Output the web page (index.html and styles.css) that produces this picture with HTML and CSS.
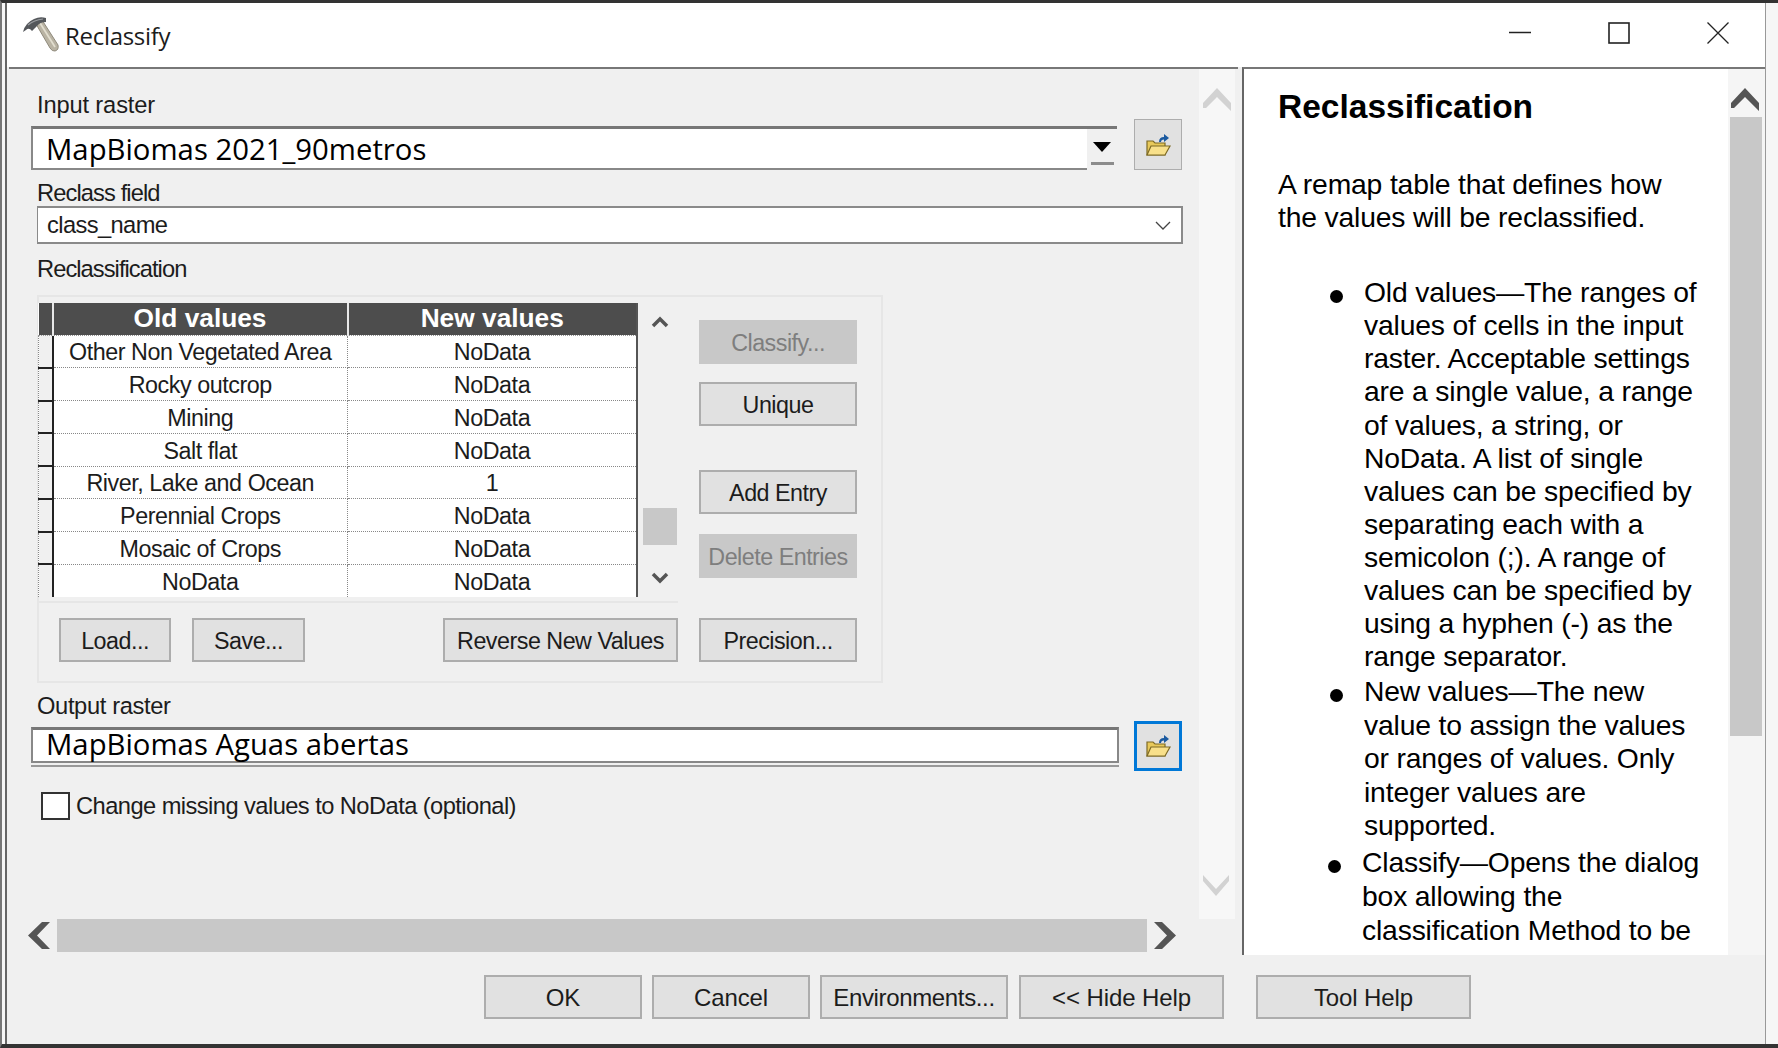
FILE: index.html
```html
<!DOCTYPE html>
<html lang="en">
<head>
  <meta charset="UTF-8">
  <title>Reclassify</title>
  <link rel="stylesheet" href="styles.css">
</head>
<body>
  <div class="window">
    <div class="titlebar">
      <svg class="hammer" width="38" height="38" viewBox="0 0 38 38">
        <path d="M14 9 L20 5 L36 30 Q37 35 33 36 Q30 36.500 28 33 Z" fill="#b9b3a3" stroke="#8f8a7c" stroke-width="1"/>
        <path d="M18 8 L33 32" stroke="#e2decf" stroke-width="1.800"/>
        <path d="M1 17 Q3 8 12 4 Q18 1 24 3 L24 7 Q18 7 15 11 L10 16 Q7 12 4 15 Z" fill="#54575b"/>
        <path d="M6 10 Q12 5 21 4" stroke="#9a9da1" stroke-width="1.200" fill="none"/>
      </svg>
      <span class="title">Reclassify</span>
      <div class="win-controls">
        <svg width="22" height="22" viewBox="0 0 22 22"><path d="M0 10.500 H22" stroke="#222" stroke-width="1.500"/></svg>
        <svg width="22" height="22" viewBox="0 0 22 22"><rect x="1" y="1" width="20" height="20" fill="none" stroke="#222" stroke-width="1.600"/></svg>
        <svg width="22" height="22" viewBox="0 0 22 22"><path d="M0.500 0.500 L21.500 21.500 M21.500 0.500 L0.500 21.500" stroke="#222" stroke-width="1.300"/></svg>
      </div>
    </div>

    <div class="main">
      <div class="form-panel">
        <div class="form-top">
          <div class="fields">
            <div class="label first">Input raster</div>
            <div class="path-row">
              <div class="path-box input-raster">MapBiomas 2021_90metros</div>
              <div class="drop-strip"><span class="drop-arrow"></span><span class="drop-line"></span></div>
              <button class="folder-btn">
                <svg width="26" height="24" viewBox="0 0 26 24">
                  <path d="M2 8 H8 L10 10 H20 V22 H2 Z" fill="#e8c95a" stroke="#7d6a25" stroke-width="1.200"/>
                  <path d="M2 22 L6 13 H25 L20 22 Z" fill="#f8e08a" stroke="#7d6a25" stroke-width="1.200"/>
                  <path d="M14 9 Q14 4 19 4 V1 L24 5 L19 9 V6.500 Q16 6.500 16 9 Z" fill="#1b5aa0"/>
                </svg>
              </button>
            </div>

            <div class="label reclass-label">Reclass field</div>
            <div class="combo">
              <span>class_name</span>
              <svg width="16" height="9" viewBox="0 0 16 9"><path d="M1 1 L8 8 L15 1" fill="none" stroke="#444" stroke-width="1.300"/></svg>
            </div>

            <div class="label table-label">Reclassification</div>
            <div class="group">
              <div class="group-left">
                <div class="upper">
                  <table class="remap">
                    <thead>
                      <tr><th class="stub"></th><th class="col-old">Old values</th><th>New values</th></tr>
                    </thead>
                    <tbody>
                      <tr><td class="stub"></td><td>Other Non Vegetated Area</td><td>NoData</td></tr>
                      <tr><td class="stub"></td><td>Rocky outcrop</td><td>NoData</td></tr>
                      <tr><td class="stub"></td><td>Mining</td><td>NoData</td></tr>
                      <tr><td class="stub"></td><td>Salt flat</td><td>NoData</td></tr>
                      <tr><td class="stub"></td><td>River, Lake and Ocean</td><td>1</td></tr>
                      <tr><td class="stub"></td><td>Perennial Crops</td><td>NoData</td></tr>
                      <tr><td class="stub"></td><td>Mosaic of Crops</td><td>NoData</td></tr>
                      <tr><td class="stub"></td><td>NoData</td><td>NoData</td></tr>
                    </tbody>
                  </table>
                  <div class="table-scroll">
                    <svg class="chev-up" width="18" height="12" viewBox="0 0 18 12"><path d="M2 10 L9 3 L16 10" fill="none" stroke="#555" stroke-width="3.500"/></svg>
                    <div class="table-thumb"></div>
                    <svg class="chev-down" width="18" height="12" viewBox="0 0 18 12"><path d="M2 2 L9 9 L16 2" fill="none" stroke="#555" stroke-width="3.500"/></svg>
                  </div>
                </div>
                <div class="lower">
                  <button class="btn load">Load...</button>
                  <button class="btn save">Save...</button>
                  <button class="btn reverse">Reverse New Values</button>
                </div>
              </div>
              <div class="group-right">
                <button class="btn side off classify">Classify...</button>
                <button class="btn side unique">Unique</button>
                <button class="btn side add">Add Entry</button>
                <button class="btn side off del">Delete Entries</button>
                <button class="btn side precision">Precision...</button>
              </div>
            </div>

            <div class="label output-label">Output raster</div>
            <div class="path-row output-row">
              <div class="path-box output-raster">MapBiomas Aguas abertas</div>
              <button class="folder-btn focused">
                <svg width="26" height="24" viewBox="0 0 26 24">
                  <path d="M2 8 H8 L10 10 H20 V22 H2 Z" fill="#e8c95a" stroke="#7d6a25" stroke-width="1.200"/>
                  <path d="M2 22 L6 13 H25 L20 22 Z" fill="#f8e08a" stroke="#7d6a25" stroke-width="1.200"/>
                  <path d="M14 9 Q14 4 19 4 V1 L24 5 L19 9 V6.500 Q16 6.500 16 9 Z" fill="#1b5aa0"/>
                </svg>
              </button>
            </div>

            <div class="check-row">
              <span class="checkbox"></span>
              <span class="check-text">Change missing values to NoData (optional)</span>
            </div>
          </div>

          <div class="form-vscroll">
            <svg width="28" height="23" viewBox="0 0 28 23"><path d="M0 20 V15 L14 0 L28 15 V23 L14 9 L3 20 Z" fill="#d2d2d2"/></svg>
            <svg class="vscroll-down" width="28" height="21" viewBox="0 0 28 21"><path d="M1 0 L14 14 L27 0 V6 L14 21 L1 6 Z" fill="#d2d2d2"/></svg>
          </div>
        </div>

        <div class="form-hscroll">
          <svg width="22" height="27" viewBox="0 0 22 27"><path d="M14 0 H22 L9 13.500 L22 27 H14 L0 13.500 Z" fill="#555"/></svg>
          <div class="hscroll-track"></div>
          <svg width="22" height="27" viewBox="0 0 22 27"><path d="M8 0 H0 L13 13.500 L0 27 H8 L22 13.500 Z" fill="#555"/></svg>
        </div>
      </div>

      <div class="help">
        <div class="help-body">
          <h2>Reclassification</h2>
          <p>A remap table that defines how<br>the values will be reclassified.</p>
          <ul>
            <li>Old values—The ranges of<br>values of cells in the input<br>raster. Acceptable settings<br>are a single value, a range<br>of values, a string, or<br>NoData. A list of single<br>values can be specified by<br>separating each with a<br>semicolon (;). A range of<br>values can be specified by<br>using a hyphen (-) as the<br>range separator.</li>
            <li class="second">New values—The new<br>value to assign the values<br>or ranges of values. Only<br>integer values are<br>supported.</li>
            <li class="shifted">Classify—Opens the dialog<br>box allowing the<br>classification Method to be</li>
          </ul>
        </div>
        <div class="help-scroll">
          <svg class="help-chev" width="28" height="23" viewBox="0 0 28 23"><path d="M0 20 V15 L14 0 L28 15 V23 L14 9 L3 20 Z" fill="#555"/></svg>
          <div class="help-thumb"></div>
        </div>
      </div>
    </div>

    <div class="footer">
      <button class="btn foot ok">OK</button>
      <button class="btn foot cancel">Cancel</button>
      <button class="btn foot envs">Environments...</button>
      <button class="btn foot hide">&lt;&lt; Hide Help</button>
      <button class="btn foot toolhelp">Tool Help</button>
    </div>
  </div>
</body>
</html>
```

FILE: styles.css
```css
* {
  box-sizing: border-box;
}
html, body {
  margin: 0;
  height: 100%;
}
body {
  width: 1778px;
  height: 1048px;
  overflow: hidden;
  background-color: #f6f6f6;
  border-top: 3px solid #333;
  border-bottom: 4px solid #333;
  border-left: 2px solid #777;
  font-family: "Liberation Sans", Arial, sans-serif;
  font-size: 23.7px;
  color: #1c1c1c;
}
.window {
  width: 1761px;
  height: 1041px;
  margin-left: 3px;
  border-left: 2px solid #666;
  border-right: 1px solid #999;
  background-color: #f0f0f0;
  display: flex;
  flex-direction: column;
}

/* title bar */
.titlebar {
  height: 64px;
  background-color: #fff;
  display: flex;
  align-items: center;
  padding-left: 15px;
  flex: none;
}
.hammer {
  margin-top: -2px;
}
.title {
  margin-left: 5px;
  font-family: "Open Sans", sans-serif;
  font-size: 24px;
  letter-spacing: -0.3px;
}
.win-controls {
  margin-left: auto;
  margin-right: 36px;
  margin-top: -4px;
  display: flex;
  gap: 77px;
}

/* main area */
.main {
  height: 888px;
  flex: none;
  display: flex;
}
.form-panel {
  width: 1229px;
  margin-left: 2px;
  border-top: 2px solid #777;
  display: flex;
  flex-direction: column;
}
.form-top {
  height: 850px;
  display: flex;
}
.fields {
  width: 1190px;
  padding-left: 28px;
}
.label {
  height: 26px;
  line-height: 26px;
}
.label.first {
  margin-top: 23px;
  letter-spacing: -0.15px;
}
.reclass-label {
  margin-top: 10px;
  letter-spacing: -0.9px;
}
.table-label {
  margin-top: 12px;
  letter-spacing: -0.95px;
}
.output-label {
  margin-top: 10px;
  letter-spacing: -0.36px;
}

.path-row {
  height: 51px;
  margin-left: -6px;
  margin-top: 1px;
  display: flex;
  align-items: flex-end;
}
.path-box {
  background-color: #fff;
  border: 2px solid #888;
  border-top: 3px solid #777;
  border-right: none;
  padding-left: 13px;
  font-family: "Open Sans", sans-serif;
  font-size: 29.3px;
  color: #000;
}
.input-raster {
  width: 1056px;
  height: 44px;
  line-height: 41px;
}
.drop-strip {
  width: 30px;
  height: 44px;
  border-top: 3px solid #777;
  display: flex;
  flex-direction: column;
  align-items: center;
  padding-top: 13px;
}
.drop-arrow {
  width: 0;
  height: 0;
  border-left: 9px solid transparent;
  border-right: 9px solid transparent;
  border-top: 10px solid #000;
}
.drop-line {
  width: 23px;
  height: 3px;
  margin-top: 10px;
  background-color: #8c8c8c;
}
.folder-btn {
  width: 48px;
  height: 51px;
  margin-left: 17px;
  padding: 0;
  background-color: #e1e1e1;
  border: 1px solid #adadad;
  display: flex;
  align-items: center;
  justify-content: center;
}
.folder-btn.focused {
  height: 50px;
  border: 3px solid #0078d7;
}
.combo {
  height: 38px;
  width: 1146px;
  background-color: #fff;
  border: 1px solid #8a8a8a;
  border-width: 2px 2px 2px 1px;
  padding: 0 10px 0 9px;
  display: flex;
  align-items: center;
  justify-content: space-between;
  letter-spacing: -0.6px;
}

/* reclassification group */
.group {
  width: 846px;
  height: 388px;
  margin-top: 13px;
  border: 2px solid #e6e6e6;
  display: flex;
}
.group-left {
  width: 639px;
  flex: none;
}
.upper {
  height: 306px;
  padding-top: 6px;
  margin-left: -1px;
  border-bottom: 2px solid #e6e6e6;
  display: flex;
}
.remap {
  width: 600px;
  height: 293px;
  flex: none;
  table-layout: fixed;
  border-collapse: collapse;
  background-color: #fff;
  border-right: 2px solid #555;
}
.remap th {
  height: 32px;
  padding: 0;
  background-color: #4d4d4d;
  color: #fff;
  font-size: 26.3px;
  font-weight: bold;
  border-bottom: 1px dotted #999;
}
.remap th.stub {
  width: 14px;
  border-right: 2px solid #e8e8e8;
}
.remap th.col-old {
  width: 295px;
  border-right: 2px solid #e8e8e8;
}
.remap td {
  height: 32.75px;
  padding: 2px 0 0;
  text-align: center;
  font-size: 23.3px;
  letter-spacing: -0.45px;
  line-height: 28px;
  border-bottom: 1px dotted #888;
  border-right: 1px dotted #888;
}
.remap td:last-child {
  border-right: none;
}
.remap tr:last-child td {
  border-bottom: none;
}
.remap td.stub {
  background-color: #f0f0f0;
  border-left: 1px dotted #888;
  border-right: 2px solid #222;
  border-bottom: 2px solid #222;
}
.table-scroll {
  width: 34px;
  height: 293px;
  margin-left: 5px;
  display: flex;
  flex-direction: column;
  align-items: center;
}
.chev-up {
  margin-top: 13px;
}
.table-thumb {
  width: 34px;
  height: 37px;
  margin-top: 180px;
  background-color: #c8c8c8;
}
.chev-down {
  margin-top: 27px;
}
.lower {
  padding: 15px 0 0 20px;
  display: flex;
}
.btn {
  height: 44px;
  padding: 2px 0 0;
  background-color: #e1e1e1;
  border: 2px solid #adadad;
  font-family: "Liberation Sans", Arial, sans-serif;
  font-size: 23.3px;
  letter-spacing: -0.5px;
  color: #1c1c1c;
}
.btn.load {
  width: 112px;
}
.btn.save {
  width: 113px;
  margin-left: 21px;
}
.btn.reverse {
  width: 235px;
  margin-left: auto;
}
.group-right {
  margin-left: 21px;
  padding-top: 23px;
  display: flex;
  flex-direction: column;
}
.btn.side {
  width: 158px;
}
.btn.off {
  background-color: #c8c8c8;
  border-color: #c8c8c8;
  color: #7e7e7e;
}
.btn.unique {
  margin-top: 18px;
}
.btn.add {
  margin-top: 44px;
}
.btn.del {
  margin-top: 20px;
}
.btn.precision {
  margin-top: 40px;
}

/* output */
.output-row {
  margin-top: 2px;
  height: 50px;
  align-items: flex-start;
}
.output-raster {
  width: 1088px;
  height: 36px;
  margin-top: 6px;
  line-height: 29px;
  border-right: 2px solid #888;
  box-shadow: 0 2px 0 #f0f0f0, 0 4px 0 #999;
}
.output-row .folder-btn {
  margin-left: 15px;
}
.check-row {
  margin-top: 21px;
  margin-left: 4px;
  display: flex;
  align-items: center;
  gap: 6px;
}
.check-text {
  letter-spacing: -0.56px;
}
.checkbox {
  width: 29px;
  height: 28px;
  background-color: #fff;
  border: 2px solid #333;
}

/* panel scrollbars */
.form-vscroll {
  width: 36px;
  background-color: #f7f7f7;
  display: flex;
  flex-direction: column;
  align-items: center;
  justify-content: space-between;
  padding: 19px 0 23px;
}
.vscroll-down {
  margin-left: -3px;
}
.form-hscroll {
  height: 33px;
  padding-left: 19px;
  display: flex;
  align-items: center;
  gap: 7px;
}
.hscroll-track {
  width: 1090px;
  height: 33px;
  background-color: #c8c8c8;
}

/* help */
.help {
  width: 523px;
  margin-left: 4px;
  border-left: 2px solid #666;
  border-top: 2px solid #777;
  background-color: #fff;
  display: flex;
  overflow: hidden;
}
.help-body {
  flex: 1;
  padding: 18px 0 0 34px;
  font-size: 28.3px;
  letter-spacing: -0.17px;
  line-height: 33.1px;
  color: #000;
  overflow: hidden;
}
.help-body h2 {
  margin: 0;
  font-size: 33.5px;
  letter-spacing: 0;
  line-height: 40px;
}
.help-body p {
  margin: 41px 0 0;
}
.help-body ul {
  margin: 42px 0 0;
  padding-left: 86px;
  list-style: none;
}
.help-body li {
  margin-bottom: 2px;
}
.help-body li::before {
  content: "";
  display: inline-block;
  width: 13px;
  height: 13px;
  margin-left: -34px;
  margin-right: 21px;
  border-radius: 50%;
  background-color: #000;
  vertical-align: -1px;
}
.help-body li.second {
  line-height: 33.5px;
}
.help-body li.shifted {
  margin-left: -2px;
  margin-top: 2px;
  line-height: 34px;
}
.help-scroll {
  width: 37px;
  flex: none;
  background-color: #f5f5f5;
  display: flex;
  flex-direction: column;
  align-items: center;
  padding-top: 19px;
}
.help-chev {
  margin-left: -4px;
}
.help-thumb {
  width: 32px;
  height: 619px;
  margin-top: 6px;
  margin-left: -2px;
  background-color: #c8c8c8;
}

/* bottom buttons */
.footer {
  flex: 1;
  padding: 20px 0 0 477px;
  display: flex;
}
.btn.foot {
  height: 44px;
  font-size: 24px;
  letter-spacing: -0.1px;
}
.btn.ok {
  width: 158px;
}
.btn.cancel {
  width: 158px;
  margin-left: 10px;
}
.btn.envs {
  width: 188px;
  margin-left: 10px;
  letter-spacing: -0.35px;
}
.btn.hide {
  width: 205px;
  margin-left: 11px;
}
.btn.toolhelp {
  width: 215px;
  margin-left: 32px;
}
```
